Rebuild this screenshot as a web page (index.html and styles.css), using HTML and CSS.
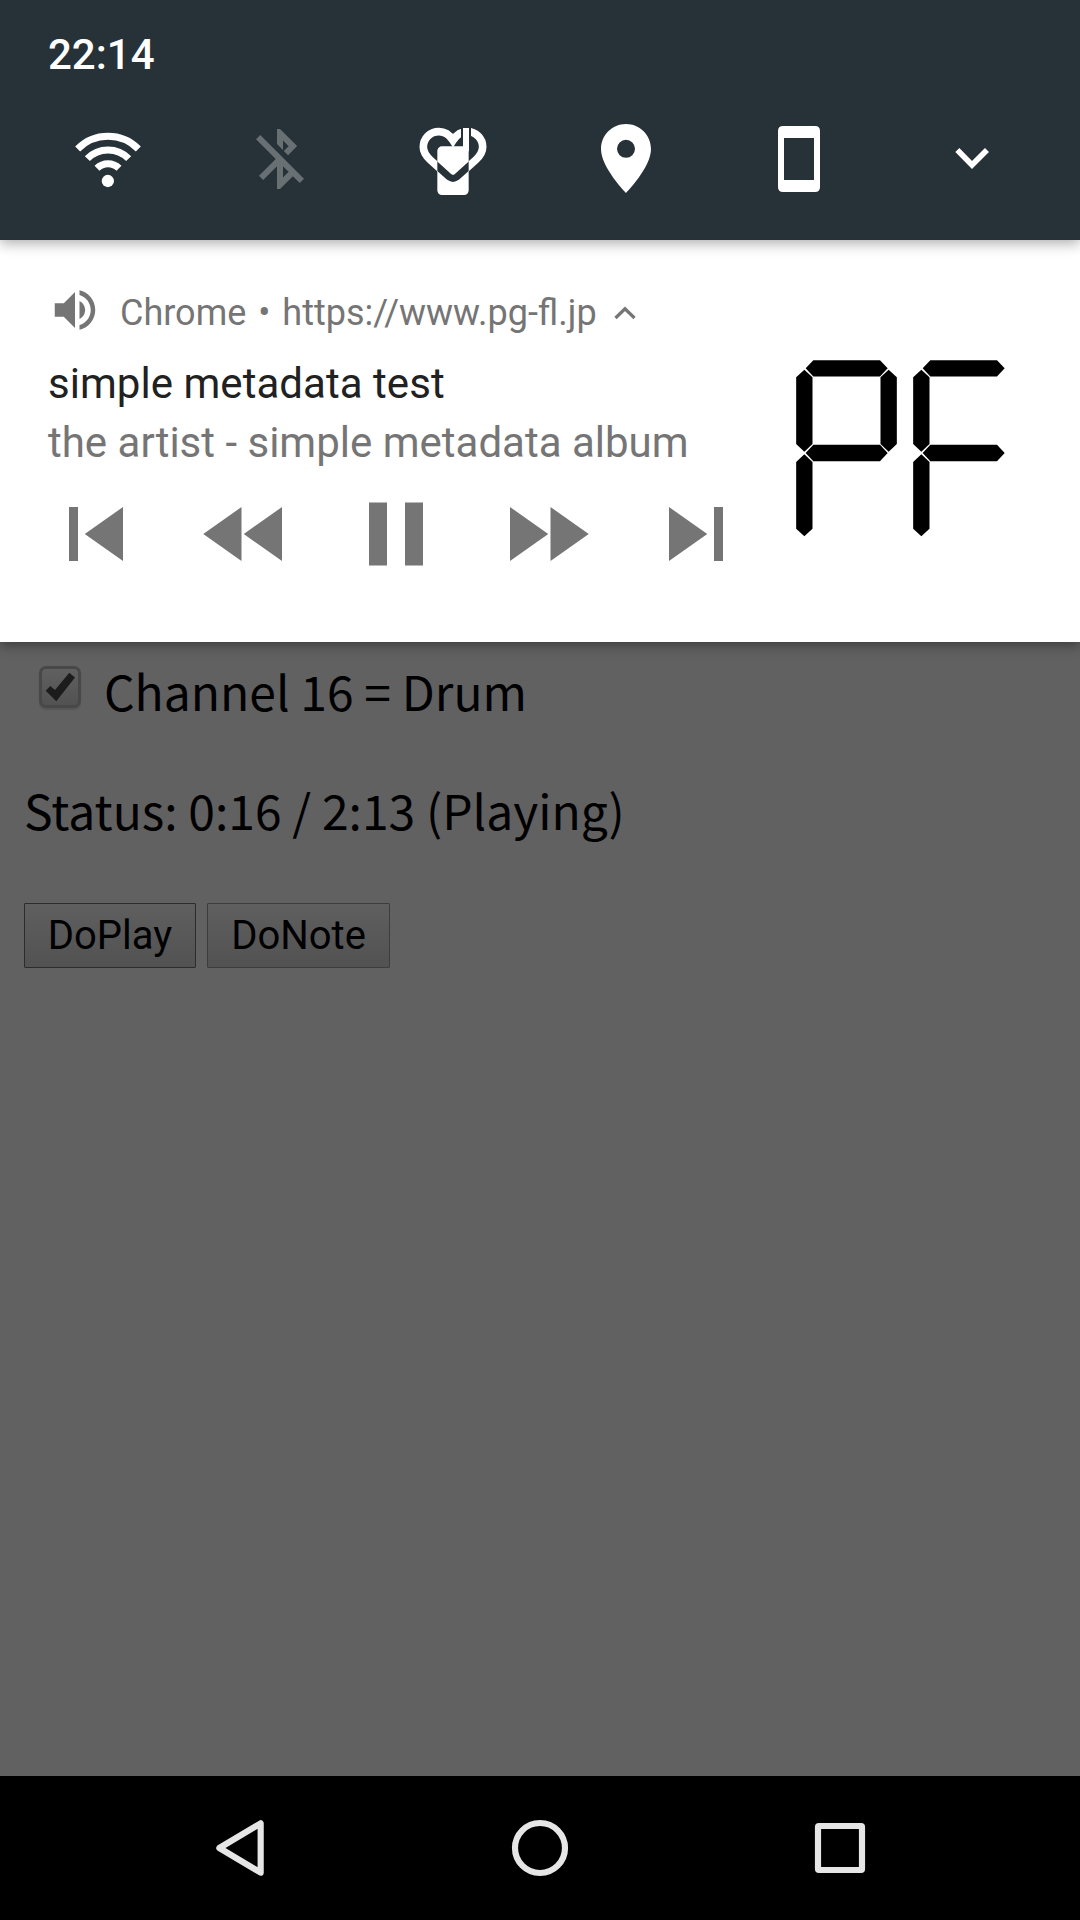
FILE: index.html
```html
<!DOCTYPE html>
<html lang="en">
<head>
    <meta charset="UTF-8">
    <meta name="viewport" content="width=device-width, initial-scale=1.0">
    <title>simple metadata test</title>
    <link rel="stylesheet" href="styles.css">
</head>
<body>
    <header class="quick-panel">
        <div class="clock">22:14</div>
        <div class="quick-icons">
            <!-- wifi -->
            <svg class="quick-icon" viewBox="213 369 216 216">
                <g fill="none" stroke="#fff" stroke-width="21">
                    <path d="M233 447A128 128 0 0 1 415 447"/>
                    <path d="M262 476A87 87 0 0 1 386 476"/>
                    <path d="M291 505A47 47 0 0 1 357 505"/>
                </g>
                <circle cx="323.500" cy="543" r="18.500" fill="#fff"/>
            </svg>
            <!-- bluetooth off -->
            <svg class="quick-icon off" viewBox="0 0 24 24">
                <path d="M13 5.830l1.880 1.880-1.600 1.600 1.410 1.410 3.020-3.020L12 2h-1v5.030l2 2v-3.200zM5.410 4L4 5.410 10.590 12 5 17.590 6.410 19 11 14.410V22h1l4.290-4.290 2.300 2.290L20 18.590 5.410 4zM13 18.170v-3.760l1.880 1.880L13 18.170z"/>
            </svg>
            <!-- heart and bottle -->
            <svg class="quick-icon" viewBox="171 69 216 216">
                <defs>
                    <clipPath id="bottle"><rect x="232" y="139" width="94" height="146" rx="14"/></clipPath>
                    <path id="heart" d="M279 121C268 104 255 95 237 95C209 95 190 116 190 141C190 159 199 169 211 180L268 231Q279 239 290 231L347 180C359 169 368 159 368 141C368 116 349 95 321 95C303 95 290 104 279 121Z"/>
                </defs>
                <use href="#heart" fill="none" stroke="#fff" stroke-width="23"/>
                <rect x="303" y="80" width="30" height="58" fill="#263238"/>
                <rect x="232" y="139" width="94" height="146" rx="14"/>
                <path d="M309 84h18v70h-18z"/>
                <g clip-path="url(#bottle)">
                    <path d="M220 188L268 231Q279 239 290 231L338 188" fill="none" stroke="#263238" stroke-width="21"/>
                </g>
            </svg>
            <!-- location -->
            <svg class="quick-icon" viewBox="0 0 72 72">
                <path fill-rule="evenodd" d="M36 1C22.200 1 11 12.200 11 26C11 44.500 36 70 36 70S61 44.500 61 26C61 12.200 49.800 1 36 1zM36 16.800a9 9 0 1 1 0 18a9 9 0 0 1 0-18z"/>
            </svg>
            <!-- portrait lock -->
            <svg class="quick-icon" viewBox="129 69 216 216">
                <path fill-rule="evenodd" d="M189 78h96q15 0 15 15v168q0 15-15 15h-96q-15 0-15-15V93q0-15 15-15zM192 114v126h90V114z"/>
            </svg>
            <!-- expand -->
            <svg class="quick-icon" viewBox="648 69 216 216">
                <path d="M712 150L756 195L801 150" fill="none" stroke="#fff" stroke-width="17"/>
            </svg>
        </div>
    </header>

    <section class="notification">
        <div class="notification-main">
            <div class="app-row">
                <svg class="speaker" viewBox="0 0 24 24">
                    <path d="M3 9v6h4l5 5V4L7 9H3zm13.500 3c0-1.770-1.020-3.290-2.500-4.030v8.050c1.480-.730 2.500-2.250 2.500-4.020zM14 3.230v2.060c2.890.860 5 3.540 5 6.710s-2.110 5.850-5 6.710v2.060c4.010-.910 7-4.490 7-8.770s-2.990-7.860-7-8.770z"/>
                </svg>
                <span class="app-name">Chrome</span>
                <span class="divider">•</span>
                <span class="app-url">https://www.pg-fl.jp</span>
                <svg class="collapse" viewBox="0 0 22 14">
                    <path d="M1.500 12L11 2.800L20.500 12" fill="none" stroke="#757575" stroke-width="3.200"/>
                </svg>
            </div>
            <div class="title">simple metadata test</div>
            <div class="artist">the artist - simple metadata album</div>
            <div class="media-actions">
                <svg viewBox="0 0 24 24"><path d="M6 6h2v12H6zm3.500 6l8.500 6V6z"/></svg>
                <svg viewBox="0 0 24 24"><path d="M11 18V6l-8.500 6 8.500 6zm.500-6l8.500 6V6l-8.500 6z"/></svg>
                <svg viewBox="0 0 24 24"><path d="M6 19h4V5H6v14zm8-14v14h4V5h-4z"/></svg>
                <svg viewBox="0 0 24 24"><path d="M4 18l8.500-6L4 6v12zm9-12v12l8.500-6L13 6z"/></svg>
                <svg viewBox="0 0 24 24"><path d="M6 18l8.500-6L6 6v12zM16 6v12h2V6h-2z"/></svg>
            </div>
        </div>
        <!-- album art: seven segment display -->
        <svg class="artwork" viewBox="0 0 840 690">
            <defs>
                <path id="seg" d="M-123 0l23-24.500h200l23 24.500l-23 24.500h-200z"/>
            </defs>
            <use href="#seg" transform="translate(260 115)"/>
            <use href="#seg" transform="translate(260 369)"/>
            <use href="#seg" transform="translate(133 242) rotate(90)"/>
            <use href="#seg" transform="translate(386 242) rotate(90)"/>
            <use href="#seg" transform="translate(133 496) rotate(90)"/>
            <use href="#seg" transform="translate(611 115)"/>
            <use href="#seg" transform="translate(611 369)"/>
            <use href="#seg" transform="translate(484 242) rotate(90)"/>
            <use href="#seg" transform="translate(484 496) rotate(90)"/>
        </svg>
    </section>

    <main class="page">
        <div class="channel">
            <span class="checkbox">
                <svg viewBox="0 0 36 36"><path d="M3.700 21.700L8.300 17L13 21L27.300 3.700L33 8.500L14.300 32.300z"/></svg>
            </span>
            <span>Channel 16 = Drum</span>
        </div>
        <div class="status">Status: 0:16 / 2:13 (Playing)</div>
        <div class="buttons">
            <button class="button play">DoPlay</button>
            <button class="button note">DoNote</button>
        </div>
    </main>

    <nav class="nav-bar">
        <svg viewBox="72 156 216 216"><path d="M118 264L242 190V338Z"/></svg>
        <svg viewBox="972 156 216 216"><circle cx="1080" cy="264" r="75"/></svg>
        <svg viewBox="612 156 216 216"><rect x="654" y="198" width="132" height="132" rx="3"/></svg>
    </nav>
</body>
</html>
```
FILE: styles.css
```css
body {
    margin: 0;
    width: 1080px;
    height: 1920px;
    display: flex;
    flex-direction: column;
    overflow: hidden;
    background-color: #616161;
    font-family: Roboto, sans-serif;
}
svg {
    display: block;
    flex: none;
}
.quick-panel {
    position: relative;
    z-index: 2;
    box-sizing: border-box;
    height: 240px;
    padding-top: 25px;
    background-color: #263238;
    box-shadow: 0 4px 12px rgba(0, 0, 0, 0.3);
}
.clock {
    padding-left: 48px;
    font-size: 42px;
    line-height: 60px;
    font-weight: 500;
    color: #ffffff;
}
.quick-icons {
    display: flex;
    gap: 101px;
    margin-top: 38px;
    padding-left: 71px;
}
.quick-icon {
    width: 72px;
    height: 72px;
    fill: #ffffff;
}
.off {
    opacity: 0.3;
}
.notification {
    position: relative;
    z-index: 1;
    box-sizing: border-box;
    display: flex;
    height: 402px;
    background-color: #ffffff;
    box-shadow: 0 3px 12px rgba(0, 0, 0, 0.4);
}
.notification-main {
    width: 760px;
    padding-top: 43px;
}
.app-row {
    display: flex;
    align-items: center;
    height: 54px;
    padding-left: 48px;
    font-size: 36px;
    line-height: 48px;
    color: #757575;
}
.app-row span {
    padding-top: 5px;
}
.speaker {
    width: 54px;
    height: 54px;
    fill: #757575;
}
.app-name {
    margin-left: 18px;
}
.divider {
    width: 36px;
    text-align: center;
}
.collapse {
    width: 22px;
    height: 14px;
    margin: 5px 0 0 17px;
}
.title,
.artist {
    padding-left: 48px;
    font-size: 42px;
    line-height: 59px;
}
.title {
    margin-top: 17px;
    letter-spacing: 0.04px;
    color: #212121;
}
.artist {
    color: #757575;
}
.media-actions {
    display: flex;
    gap: 42px;
    margin-top: 8px;
    padding-left: 42px;
}
.media-actions svg {
    width: 108px;
    height: 108px;
    fill: #757575;
}
.artwork {
    width: 280px;
    height: 230px;
    margin-top: 90px;
}
.page {
    height: 1134px;
    font-family: "Noto Sans CJK JP", sans-serif;
    font-size: 48px;
    line-height: 72px;
    color: #000000;
}
.channel {
    display: flex;
    align-items: flex-start;
    padding: 12px 0 0 39px;
}
.checkbox {
    box-sizing: border-box;
    width: 42px;
    height: 42px;
    margin: 12px 23px 0 0;
    border: 3px solid #484848;
    border-radius: 7px;
    background: linear-gradient(#606060, #525252);
    box-shadow: 0 2px 1px #575757;
}
.checkbox svg {
    width: 36px;
    height: 36px;
    fill: #1c1c1c;
}
.status {
    margin-top: 47px;
    padding-left: 24px;
}
.buttons {
    display: flex;
    gap: 11px;
    margin-top: 58px;
    padding-left: 24px;
}
.button {
    height: 65px;
    padding: 0;
    border: 1px solid #3d3d3d;
    border-radius: 1px;
    background: linear-gradient(#5f5f5f, #525252);
    font-family: Roboto, sans-serif;
    font-size: 40px;
    color: #000000;
}
.play {
    width: 172px;
    border-color: #2c2c2c;
}
.note {
    width: 183px;
}
.nav-bar {
    display: flex;
    justify-content: center;
    align-items: center;
    gap: 228px;
    height: 144px;
    background-color: #000000;
}
.nav-bar svg {
    width: 72px;
    height: 72px;
    fill: none;
    stroke: #e6e6e6;
    stroke-width: 18.5;
    stroke-linejoin: round;
}
```
